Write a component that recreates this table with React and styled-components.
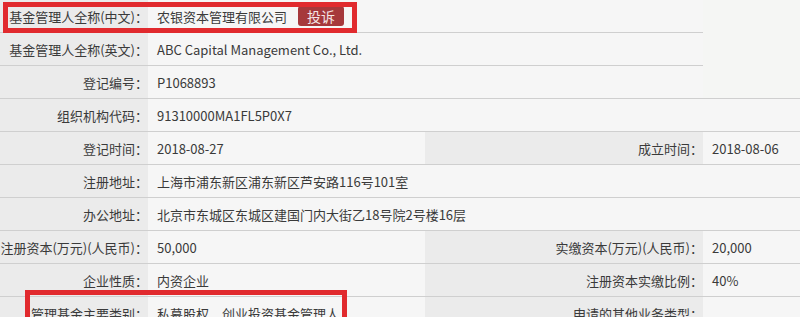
import styled, { createGlobalStyle } from "styled-components";

const GlobalStyle = createGlobalStyle`
  html, body {
    margin: 0;
    padding: 0;
    background: #f6f6f6;
    overflow: hidden;
  }
  body {
    font-family: "Noto Sans CJK SC", "Noto Sans", sans-serif;
    font-size: 13px;
    color: #333;
  }
`;

const rows = [
  { label: "基金管理人全称(中文)：", value: "农银资本管理有限公司", span: 2, complain: true },
  { label: "基金管理人全称(英文)：", value: "ABC Capital Management Co., Ltd.", span: 2 },
  { label: "登记编号：", value: "P1068893", span: 2 },
  { label: "组织机构代码：", value: "91310000MA1FL5P0X7", span: 3 },
  { label: "登记时间：", value: "2018-08-27", label2: "成立时间：", value2: "2018-08-06" },
  { label: "注册地址：", value: "上海市浦东新区浦东新区芦安路116号101室", span: 3 },
  { label: "办公地址：", value: "北京市东城区东城区建国门内大街乙18号院2号楼16层", span: 3 },
  { label: "注册资本(万元)(人民币)：", value: "50,000", label2: "实缴资本(万元)(人民币)：", value2: "20,000" },
  { label: "企业性质：", value: "内资企业", label2: "注册资本实缴比例：", value2: "40%" },
  { label: "管理基金主要类别：", value: "私募股权、创业投资基金管理人", label2: "申请的其他业务类型：", value2: "" },
];

const App = () => {
  return (
    <>
      <GlobalStyle />
      <Wrapper>
        <Table>
          {rows.map((row, i) => (
            <Row key={i}>
              <Label>{row.label}</Label>
              <Value $span={row.span || 1}>
                {row.value}
                {row.complain && <Complain>投诉</Complain>}
              </Value>
              {row.label2 !== undefined && (
                <>
                  <Label>{row.label2}</Label>
                  <Value $span={1}>{row.value2}</Value>
                </>
              )}
              {i === 0 && <Blank />}
            </Row>
          ))}
        </Table>
        {/* red annotation boxes */}
        <Highlight $left={3} $top={2} $width={354} $height={31} />
        <Highlight $left={25} $top={290} $width={322} $height={40} />
      </Wrapper>
    </>
  );
};

const Wrapper = styled.div`
  position: relative;
  width: 800px;
  height: 317px;
  overflow: hidden;
`;

const Table = styled.div`
  display: grid;
  grid-template-columns: 148px 277px 278px 97px;
  grid-auto-rows: 33px;
`;

const Row = styled.div`
  display: contents;
`;

const Cell = styled.div`
  box-sizing: border-box;
  border-bottom: 1px solid #cfcfcf;
  display: flex;
  align-items: center;
  white-space: nowrap;
`;

const Label = styled(Cell)`
  background: #ebebeb;
  justify-content: flex-end;
  color: #3a3a3a;
`;

const Value = styled(Cell)`
  grid-column: span ${(p) => p.$span};
  background: #f6f6f6;
  padding-left: 9px;
  color: #3a3a3a;
`;

const Blank = styled.div`
  grid-column: 4;
  grid-row: 1 / span 3;
  background: #f5f6f4;
  border-bottom: 1px solid #cfcfcf;
  box-sizing: border-box;
`;

const Complain = styled.span`
  display: inline-block;
  margin-left: 11px;
  padding: 0 9px;
  height: 20px;
  line-height: 20px;
  background: #a6383b;
  color: #f4e6e6;
  border-radius: 3px;
  font-size: 14px;
`;

const Highlight = styled.div`
  position: absolute;
  left: ${(p) => p.$left}px;
  top: ${(p) => p.$top}px;
  width: ${(p) => p.$width}px;
  height: ${(p) => p.$height}px;
  border: 5px solid #e12a2e;
  box-sizing: border-box;
  pointer-events: none;
`;

export default App;
